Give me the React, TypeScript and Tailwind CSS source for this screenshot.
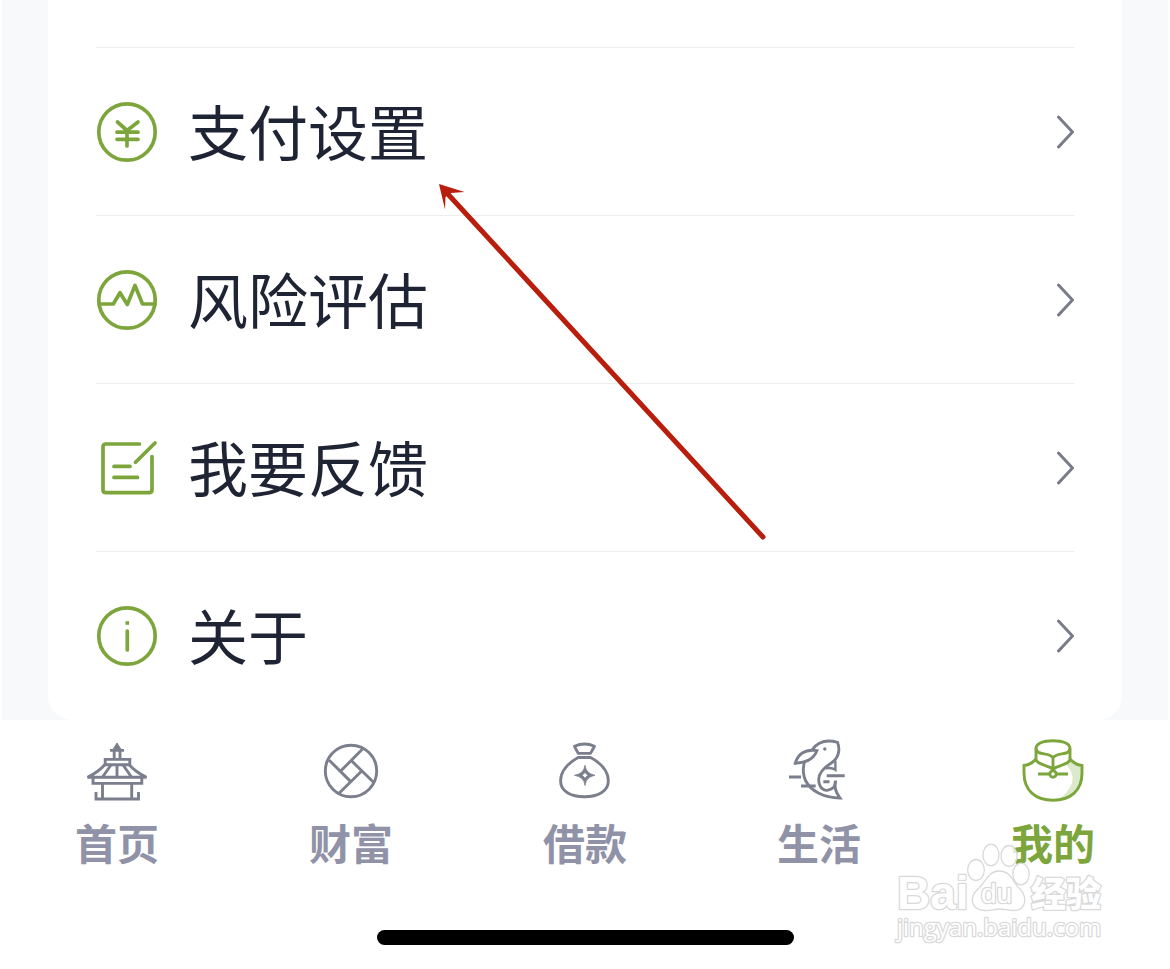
import React from 'react';

const MenuIcon: React.FC<{ children: React.ReactNode }> = ({ children }) => (
  <svg
    viewBox="0 0 64 64"
    className="size-16 shrink-0 text-[#7ca63c]"
    fill="none"
    stroke="currentColor"
    strokeWidth="3.7"
    strokeLinecap="round"
    strokeLinejoin="round"
    aria-hidden="true"
  >
    {children}
  </svg>
);

const TabIcon: React.FC<{ children: React.ReactNode }> = ({ children }) => (
  <svg viewBox="0 0 64 64" className="size-16" fill="none" stroke="currentColor" strokeWidth="2.9" aria-hidden="true">
    {children}
  </svg>
);

const menu = [
  {
    label: '支付设置',
    icon: (
      <MenuIcon>
        <circle cx="31" cy="32" r="28.2" />
        <path d="M21.5 22 31 30.5 42 22M31 30.5V46M21 32.2H42M21 39.3H42" />
      </MenuIcon>
    )
  },
  {
    label: '风险评估',
    icon: (
      <MenuIcon>
        <circle cx="31" cy="32" r="28.2" />
        <path d="M3 36H17.3L24 24.7 31.3 36.5 39 17.5 46.5 36H59" />
      </MenuIcon>
    )
  },
  {
    label: '我要反馈',
    icon: (
      <MenuIcon>
        <path d="M43.5 8H10Q7 8 7 11V53.7Q7 56.7 10 56.7H53Q56 56.7 56 53.7V20.5" />
        <path d="M59 7 39.5 26.3M18 30.4H34M18 41.4H41.5" />
      </MenuIcon>
    )
  },
  {
    label: '关于',
    icon: (
      <MenuIcon>
        <circle cx="31" cy="32" r="28.2" />
        <path d="M31.3 27V46" />
        <rect x="29.5" y="17.2" width="3.6" height="3.6" fill="currentColor" stroke="none" />
      </MenuIcon>
    )
  }
];

const tabs = [
  {
    label: '首页',
    active: false,
    icon: (
      <TabIcon>
        <path d="M32 5 36.5 12.2H27.5Z" fill="currentColor" strokeWidth="1" />
        <path d="M25 12.4H39M29.2 12.4V21M35 12.4V21" />
        <path d="M20.2 27V21.4H44.8V27M18.8 26.7H46.2" />
        <path d="M20 26.5Q13 34.5 2.5 39.2H61.5Q51 34.5 44 26.5M26 27 17.5 39M32 27V39M38 27 46.5 39" />
        <path d="M8 39.2V45.4H56.8V39.2M17.5 45.4V61M46.7 45.4V61M11 54V61H53.5V54" />
      </TabIcon>
    )
  },
  {
    label: '财富',
    active: false,
    icon: (
      <TabIcon>
        <circle cx="32" cy="33" r="25.7" />
        <path d="M43.3 11.3 21.7 33M10 22 32 43.9M20.3 55 42.7 33M54.5 44.3 32 22.3" />
      </TabIcon>
    )
  },
  {
    label: '借款',
    active: false,
    icon: (
      <TabIcon>
        <path d="M21.5 8.3Q31.5 3.8 41.5 8.3L37.5 15.4H25.2Z" strokeLinejoin="round" />
        <path d="M25.2 19.5H37.6C48 25 55.3 33.5 55.3 43 55.3 53.4 45 58.8 31.4 58.8S7.6 53.4 7.6 43C7.6 33.5 15 25 25.2 19.5Z" />
        <path
          d="M32 27.3Q33 35.8 42 37.3 33 38.8 32 47.5 31 38.8 21.5 37.3 31 35.8 32 27.3ZM32 34.5 29.2 37.3 32 40.2 34.8 37.3Z"
          fill="currentColor"
          fillRule="evenodd"
          strokeWidth="0.8"
        />
      </TabIcon>
    )
  },
  {
    label: '生活',
    active: false,
    icon: (
      <TabIcon>
        <path d="M25 12C31 3.5 40 1.5 50.5 4.3 53.5 12 51.5 20 44.7 24.8 37 29.5 31.5 35 31.7 42 32 50 37 53 41 52.2 46.5 51 49 47 48.3 42.5" />
        <path d="M48.3 43.5C47 49 48.5 54 53 60 37 59.5 24 53.5 18.5 42.5 15.8 36.5 16 30 17.2 25" />
        <path d="M8.3 25.2C10.5 17 17.5 10.5 30 12.6 26.5 22 18.5 24.5 8.3 25.2Z" />
        <path d="M48.4 23V31.8Q44.5 29 38.5 30.4" strokeWidth="2.4" />
        <circle cx="37.8" cy="11" r="1.7" fill="currentColor" stroke="none" />
        <path d="M2 39H14M14 48H28.7M39.7 37.7H57.7M36.3 43.7H42.5" />
      </TabIcon>
    )
  },
  {
    label: '我的',
    active: true,
    icon: (
      <TabIcon>
        <path d="M47 19 49 21Q54 27 61 27.5V35C61 53 49 62.3 36 62.3 54 50 56 36 44 26Q47 24 47 19Z" fill="#dce9cb" stroke="none" />
        <path d="M15 10.5C15 5.5 22 2.7 32 2.7S49 5.5 49 10.5V22C46 27.5 37 27 32 31 27 27 18 27.5 15 22Z" />
        <path d="M15 10.5C16 18.5 28 13.5 32 20 36 13.5 48 18.5 49 10.5M32 19V33" />
        <path d="M15 21Q10 26.8 3 27.5V35C3 53 15 62.3 32 62.3S61 53 61 35V27.5Q54 26.8 49 21" />
        <path d="M17 36H28.8M35.2 36H47" />
        <circle cx="32" cy="36" r="3.2" fill="#fff" />
      </TabIcon>
    )
  }
];

const Watermark: React.FC = () => (
  <svg
    viewBox="0 0 216 106"
    className="pointer-events-none absolute right-[60px] bottom-[21px] h-[106px] w-[216px]"
    fill="#fff"
    stroke="#d9d9d9"
    strokeWidth="1.3"
    strokeLinejoin="round"
    aria-hidden="true"
  >
    <g fillOpacity="0.8">
      <ellipse cx="82" cy="28" rx="8.3" ry="10.5" />
      <ellipse cx="97" cy="13" rx="8" ry="10.8" />
      <ellipse cx="115" cy="14" rx="8" ry="10.5" />
      <ellipse cx="127" cy="32" rx="8.2" ry="10.8" />
    </g>
    <g strokeWidth="2.6" className="[paint-order:stroke]">
      <text x="3" y="67" className="font-['Liberation_Sans'] text-[46px] font-bold">Bai</text>
      <text x="137" y="65" className="font-['Noto_Sans_CJK_SC',sans-serif] text-[35px] font-black">经验</text>
      <text x="3" y="94" className="font-['Open_Sans'] text-[24px]">jingyan.baidu.com</text>
    </g>
    <path d="M105 29C116 29 118 38 124 45 135 55 132 69 119 68.5 113 68.5 110 67 105 67S97 69 91 68.5C77 68 75 56 83 48 92 40 94 29 105 29Z" />
    <text x="87" y="61" strokeWidth="2.6" className="font-['Liberation_Sans'] text-[28px] [paint-order:stroke]">du</text>
  </svg>
);

const App: React.FC = () => {
  return (
    <div className="relative min-h-screen overflow-hidden bg-white font-['Noto_Sans_CJK_SC',sans-serif]">
      <main className="border-x-2 border-white bg-[#f7f9fb] px-[46px]">
        <div className="rounded-b-3xl bg-white px-12">
          <div className="h-12 border-b border-[#eeeeee]" />
          <ul>
            {menu.map((item) => (
              <li key={item.label} className="h-42 border-b border-[#eeeeee] last:border-b-0">
                <a href="#" className="flex h-full items-center gap-7 text-[#1e2433]">
                  {item.icon}
                  <span className="flex-1 pb-1 text-[60px] leading-none">{item.label}</span>
                  <svg
                    viewBox="0 0 20 36"
                    className="h-9 w-5 text-[#777a89]"
                    fill="none"
                    stroke="currentColor"
                    strokeWidth="3"
                    strokeLinecap="round"
                    aria-hidden="true"
                  >
                    <path d="M4.5 3 18.5 18 4.5 33" />
                  </svg>
                </a>
              </li>
            ))}
          </ul>
        </div>
      </main>

      <nav className="grid grid-cols-5 pt-[18px]">
        {tabs.map((tab) => (
          <a
            key={tab.label}
            href="#"
            className={`flex flex-col items-center gap-[19px] ${tab.active ? 'text-[#7ca63c]' : 'text-[#7b7f8d]'}`}
          >
            {tab.icon}
            <span className={`text-[42px] leading-none font-bold ${tab.active ? '' : 'text-[#9093a8]'}`}>
              {tab.label}
            </span>
          </a>
        ))}
      </nav>

      <div className="mx-auto mt-[67px] mb-6 h-[15px] w-[417px] rounded-full bg-black" />

      {/* pointer to the payment settings row */}
      <svg
        viewBox="0 0 330 360"
        className="pointer-events-none absolute top-[182px] left-[437px] h-[360px] w-[330px] text-[#b91d0c]"
        aria-hidden="true"
      >
        <path d="M9 10 326 355" stroke="currentColor" strokeWidth="5" strokeLinecap="round" />
        <path d="M2 2 27.5 10 14 11 8.5 15 8 27.5Z" fill="currentColor" />
      </svg>

      <Watermark />
    </div>
  );
};

export default App;
